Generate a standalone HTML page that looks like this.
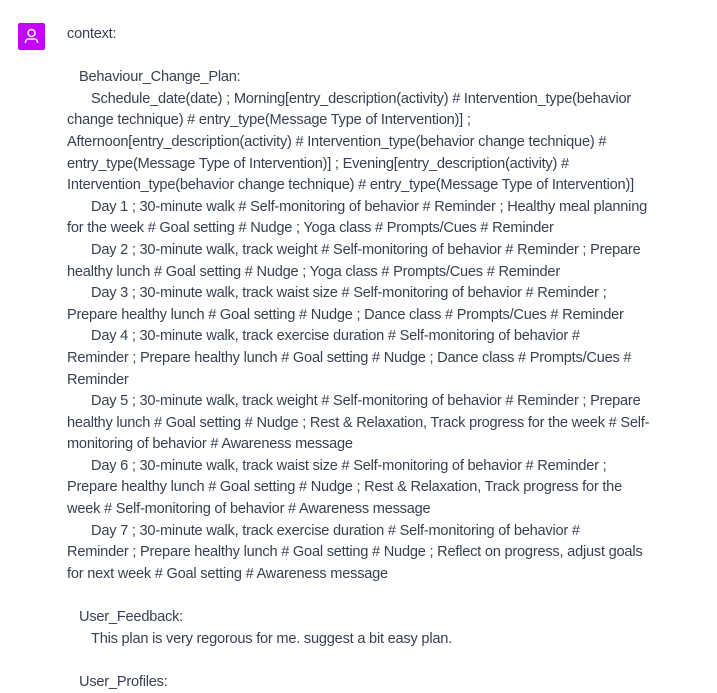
<!DOCTYPE html><html><head><style>
body{margin:0;background:#fff;width:717px;height:682px;overflow:hidden;font-family:"Liberation Sans",sans-serif;}
.av{position:absolute;left:18px;top:23px;width:27px;height:27px;background:#c600ff;border-radius:2px;}
.t{position:absolute;left:67px;top:24px;color:#374151;font-size:14.6px;line-height:21.6px;white-space:pre;letter-spacing:-0.22px;}
.a{padding-left:12px}.b{padding-left:24px}
</style></head><body>
<div class="av"><svg width="27" height="27" viewBox="0 0 27 27"><circle cx="13.5" cy="10" r="3.5" fill="none" stroke="#fff" stroke-width="1.5"/><path d="M7.5 20 v-1 a3 3 0 0 1 3-3 h6 a3 3 0 0 1 3 3 v1" fill="none" stroke="#fff" stroke-width="1.5"/></svg></div>
<div class="t"><div>context:</div><div> </div><div class="a">Behaviour_Change_Plan:</div><div class="b">Schedule_date(date) ; Morning[entry_description(activity) # Intervention_type(behavior</div><div>change technique) # entry_type(Message Type of Intervention)] ;</div><div>Afternoon[entry_description(activity) # Intervention_type(behavior change technique) #</div><div>entry_type(Message Type of Intervention)] ; Evening[entry_description(activity) #</div><div>Intervention_type(behavior change technique) # entry_type(Message Type of Intervention)]</div><div class="b">Day 1 ; 30-minute walk # Self-monitoring of behavior # Reminder ; Healthy meal planning</div><div>for the week # Goal setting # Nudge ; Yoga class # Prompts/Cues # Reminder</div><div class="b">Day 2 ; 30-minute walk, track weight # Self-monitoring of behavior # Reminder ; Prepare</div><div>healthy lunch # Goal setting # Nudge ; Yoga class # Prompts/Cues # Reminder</div><div class="b">Day 3 ; 30-minute walk, track waist size # Self-monitoring of behavior # Reminder ;</div><div>Prepare healthy lunch # Goal setting # Nudge ; Dance class # Prompts/Cues # Reminder</div><div class="b">Day 4 ; 30-minute walk, track exercise duration # Self-monitoring of behavior #</div><div>Reminder ; Prepare healthy lunch # Goal setting # Nudge ; Dance class # Prompts/Cues #</div><div>Reminder</div><div class="b">Day 5 ; 30-minute walk, track weight # Self-monitoring of behavior # Reminder ; Prepare</div><div>healthy lunch # Goal setting # Nudge ; Rest &amp; Relaxation, Track progress for the week # Self-</div><div>monitoring of behavior # Awareness message</div><div class="b">Day 6 ; 30-minute walk, track waist size # Self-monitoring of behavior # Reminder ;</div><div>Prepare healthy lunch # Goal setting # Nudge ; Rest &amp; Relaxation, Track progress for the</div><div>week # Self-monitoring of behavior # Awareness message</div><div class="b">Day 7 ; 30-minute walk, track exercise duration # Self-monitoring of behavior #</div><div>Reminder ; Prepare healthy lunch # Goal setting # Nudge ; Reflect on progress, adjust goals</div><div>for next week # Goal setting # Awareness message</div><div> </div><div class="a">User_Feedback:</div><div class="b">This plan is very regorous for me. suggest a bit easy plan.</div><div> </div><div class="a">User_Profiles:</div></div>
</body></html>
